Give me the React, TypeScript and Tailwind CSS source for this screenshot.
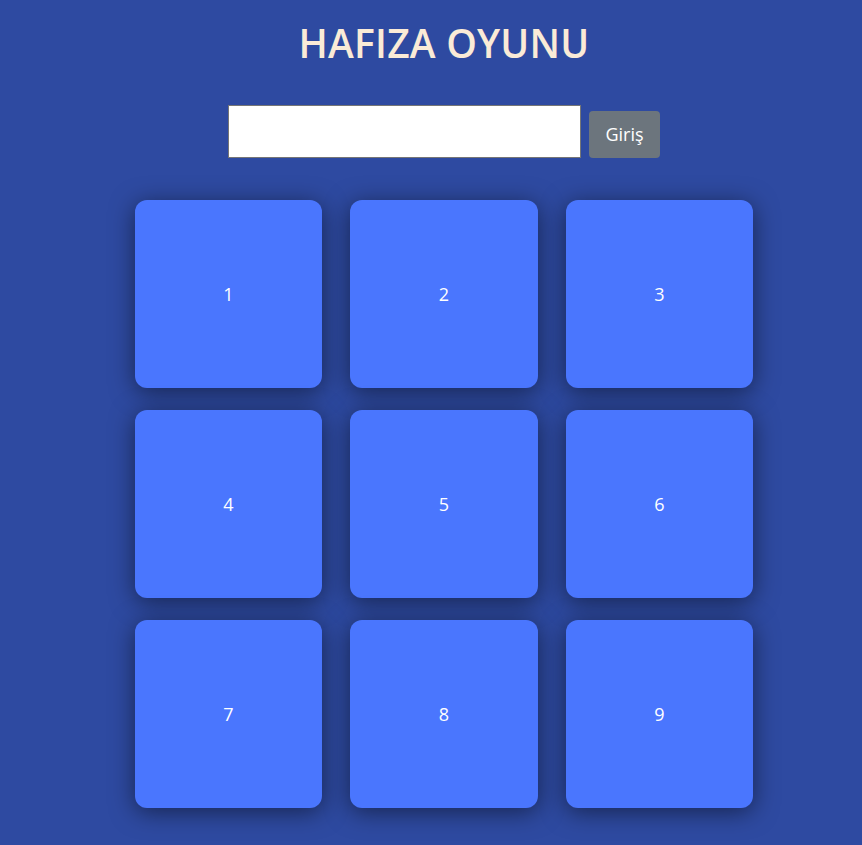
import React from "react";

export default function App() {
  const nums = [1, 2, 3, 4, 5, 6, 7, 8, 9];
  return (
    <div
      className="min-h-[845px] bg-[#2e4aa1] overflow-hidden"
      style={{ fontFamily: '"Open Sans", "Noto Sans", sans-serif' }}
    >
      <div className="w-[888px] flex flex-col items-center">
        <h1 className="mt-[18px] text-[39px] leading-[50px] font-semibold text-[#faebd7] tracking-[0.2px]">
          HAFIZA OYUNU
        </h1>
        <div className="mt-[37px] flex items-end gap-2">
          <input
            className="w-[353px] h-[53px] bg-white border border-[#767676] outline-none"
            type="text"
          />
          <button className="w-[71px] h-[47px] rounded bg-[#6c757d] text-white text-[18px]">
            Giriş
          </button>
        </div>
        <div className="mt-[42px] grid grid-cols-[187px_188px_187px] gap-x-[28px] gap-y-[22px]">
          {nums.map((n) => (
            <div
              key={n}
              className="h-[188px] rounded-xl bg-[#4a76fe] flex items-center justify-center text-white text-[18px] shadow-[0_4px_24px_rgba(0,0,0,0.5)]"
            >
              {n}
            </div>
          ))}
        </div>
      </div>
    </div>
  );
}
